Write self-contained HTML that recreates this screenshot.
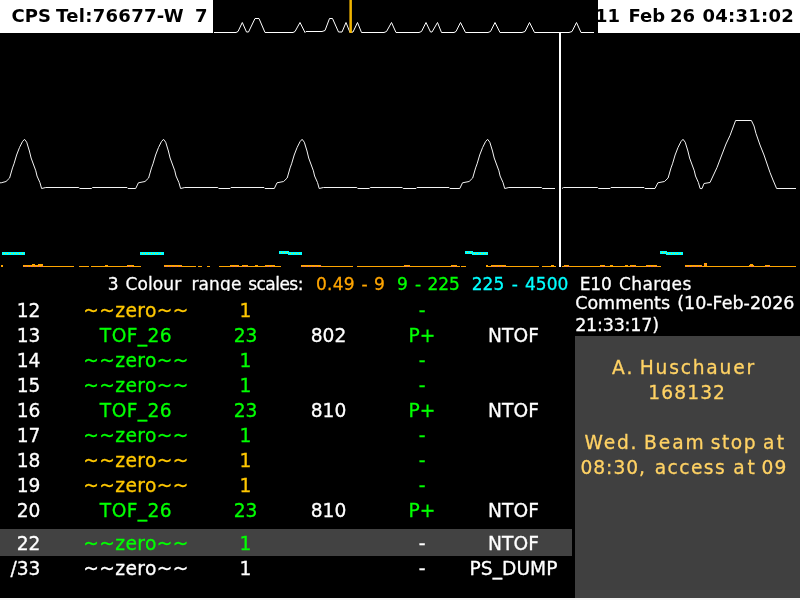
<!DOCTYPE html>
<html><head><meta charset="utf-8">
<style>
html,body{margin:0;padding:0;background:#000;}
body{width:800px;height:600px;position:relative;overflow:hidden;font-family:"DejaVu Sans","Liberation Sans",sans-serif;color:#fff;}
.abs{position:absolute;will-change:transform;}
.row{will-change:transform;}
.row,#scale,#ctitle,#panel{-webkit-text-stroke:0.3px currentColor;}
#tl{left:0;top:0;width:213px;height:33px;background:#fff;color:#000;font-weight:bold;font-size:18px;line-height:32px;white-space:pre;}
#tl span{position:absolute;top:0;}
#tr{left:598px;top:0;width:202px;height:33px;background:#fff;color:#000;font-weight:bold;font-size:18px;line-height:32px;white-space:pre;overflow:hidden;}
#tr span{position:absolute;top:0;}
#plot{left:0;top:0;}
#scale{left:0;top:273px;width:800px;height:18px;overflow:hidden;font-size:17px;line-height:22px;white-space:pre;}
#scale span{position:absolute;top:0;}
.row{position:absolute;left:0;width:572px;height:25px;font-size:18.67px;line-height:25px;white-space:pre;}
.row span{position:absolute;top:0;text-align:center;}
.c1{left:0;width:40.5px;text-align:right !important;}
.c2{left:60px;width:152px;letter-spacing:0.4px;}
.c3{left:215px;width:61px;}
.c4{left:290px;width:77px;}
.c5{left:380px;width:84px;}
.c6{left:455px;width:117px;}
.o{color:#ffc800;}
.g{color:#00ff00;}
.hl{background:#424242;}
#ctitle{left:0;top:292px;width:800px;height:44px;font-size:17.5px;line-height:22px;white-space:pre;}
#ctitle span{position:absolute;}
#panel{left:575px;top:336px;width:225px;height:262px;background:#404040;color:#ffd264;font-size:18.67px;line-height:25px;white-space:pre;}
#panel span{position:absolute;}
#bottom{left:0;top:598px;width:800px;height:2px;background:#f4f4f4;}
</style></head><body>
<svg id="plot" class="abs" width="800" height="270" viewBox="0 0 800 270" shape-rendering="crispEdges">
<polyline fill="none" stroke="#fff" stroke-width="1" stroke-linejoin="round" shape-rendering="geometricPrecision" points="214.0,32.5 236.0,32.5 238.0,31.5 242.3,22.5 246.5,32.0 248.5,32.0 255.0,18.5 259.0,18.5 265.0,32.5 293.0,32.5 295.0,31.5 300.0,22.5 305.0,32.5 306.0,31.5 322.0,31.5 325.0,30.5 329.5,18.5 332.5,18.5 338.5,32.0 342.0,32.0 346.0,22.5 350.0,32.5 353.0,32.0 357.5,22.5 361.5,32.5 384.0,32.5 386.5,31.5 391.5,22.5 396.0,32.5 419.0,32.5 421.5,31.5 426.0,22.5 430.5,32.0 432.0,32.0 437.5,22.5 441.5,32.5 454.0,32.5 456.0,31.5 460.5,22.5 465.5,32.5 488.0,32.5 490.5,31.5 495.0,22.5 500.0,32.5 522.0,32.5 525.0,31.5 529.5,22.5 534.5,32.5 569.0,32.5 572.0,31.5 576.5,22.5 581.0,32.5 594.0,32.5"/>
<polyline fill="none" stroke="#f4f4f4" stroke-width="1" stroke-linejoin="round" shape-rendering="geometricPrecision" points="0.0,182.8 1.2,182.8 6.0,181.5 9.6,178.0 12.5,167.9 14.0,163.8 16.6,155.0 19.5,147.5 22.4,141.7 24.5,139.3 26.7,142.2 29.4,151.0 31.1,158.0 35.8,170.8 37.0,176.0 39.9,182.5 41.6,188.5 45.8,187.5 78.8,187.5 79.8,188.5 91.5,188.5 92.5,187.5 127.0,187.5 128.0,188.5 135.7,188.5 138.4,182.8 145.0,181.5 148.6,178.0 151.5,167.9 153.0,163.8 155.6,155.0 158.5,147.5 161.4,141.7 163.5,139.3 165.7,142.2 168.4,151.0 170.1,158.0 174.8,170.8 176.0,176.0 178.9,182.5 180.6,188.5 184.8,187.5 217.8,187.5 218.8,188.5 230.0,188.5 231.0,187.5 264.0,187.5 265.0,188.5 274.3,188.5 277.0,182.8 283.6,181.5 287.2,178.0 290.1,167.9 291.6,163.8 294.2,155.0 297.1,147.5 300.0,141.7 302.1,139.3 304.3,142.2 307.0,151.0 308.7,158.0 313.4,170.8 314.6,176.0 317.5,182.5 319.2,188.5 323.4,187.5 356.8,187.5 357.8,188.5 369.3,188.5 370.3,187.5 402.2,187.5 403.2,188.5 416.0,188.5 417.0,187.5 449.0,187.5 450.0,188.5 459.8,188.5 462.5,182.8 469.1,181.5 472.7,178.0 475.6,167.9 477.1,163.8 479.7,155.0 482.6,147.5 485.5,141.7 487.6,139.3 489.8,142.2 492.5,151.0 494.2,158.0 498.9,170.8 500.1,176.0 503.0,182.5 504.7,188.5 508.9,187.5 541.5,187.5 542.5,188.5 555.0,188.5"/>
<polyline fill="none" stroke="#f4f4f4" stroke-width="1" stroke-linejoin="round" shape-rendering="geometricPrecision" points="562.0,188.5 563.5,187.5 597.5,187.5 598.5,188.5 610.0,188.5 611.0,187.5 644.0,187.5 645.0,188.5 655.0,188.5 657.9,182.8 664.5,181.5 668.1,178.0 671.0,167.9 672.5,163.8 675.1,155.0 678.0,147.5 680.9,141.7 683.0,139.3 685.2,142.2 687.9,151.0 689.6,158.0 694.3,170.8 695.5,176.0 698.4,182.5 700.1,188.5 702.0,188.6 704.0,183.5 710.0,182.5 717.0,167.5 721.0,157.0 726.0,144.0 730.0,135.5 735.6,120.5 751.4,120.5 754.0,126.0 756.0,133.5 760.0,145.0 764.0,155.0 770.0,172.5 773.0,180.0 776.6,188.5 796.0,188.5"/>
<rect x="349.4" y="0" width="2.5" height="33" fill="#f0b400" shape-rendering="auto"/>
<rect x="559" y="33" width="2" height="234" fill="#fff"/>
<rect x="2" y="252" width="23" height="3" fill="#00ffff"/><line x1="4" y1="253.5" x2="24" y2="253.5" stroke="#e6e600" stroke-width="1" stroke-dasharray="1 2"/>
<rect x="140" y="252" width="24" height="3" fill="#00ffff"/><line x1="142" y1="253.5" x2="163" y2="253.5" stroke="#e6e600" stroke-width="1" stroke-dasharray="1 2"/>
<rect x="279" y="251" width="10" height="3" fill="#00ffff"/><line x1="281" y1="252.5" x2="288" y2="252.5" stroke="#e6e600" stroke-width="1" stroke-dasharray="1 2"/>
<rect x="288" y="252" width="14" height="3" fill="#00ffff"/><line x1="290" y1="253.5" x2="301" y2="253.5" stroke="#e6e600" stroke-width="1" stroke-dasharray="1 2"/>
<rect x="465" y="251" width="8" height="3" fill="#00ffff"/><line x1="467" y1="252.5" x2="472" y2="252.5" stroke="#e6e600" stroke-width="1" stroke-dasharray="1 2"/>
<rect x="472" y="252" width="16" height="3" fill="#00ffff"/><line x1="474" y1="253.5" x2="487" y2="253.5" stroke="#e6e600" stroke-width="1" stroke-dasharray="1 2"/>
<rect x="660" y="251" width="7" height="3" fill="#00ffff"/><line x1="662" y1="252.5" x2="666" y2="252.5" stroke="#e6e600" stroke-width="1" stroke-dasharray="1 2"/>
<rect x="666" y="252" width="17" height="3" fill="#00ffff"/><line x1="668" y1="253.5" x2="682" y2="253.5" stroke="#e6e600" stroke-width="1" stroke-dasharray="1 2"/>
<rect x="23" y="266" width="51" height="1" fill="#ffa500"/>
<rect x="79" y="266" width="10" height="1" fill="#ffa500"/>
<rect x="91" y="266" width="50" height="1" fill="#ffa500"/>
<rect x="164" y="266" width="32" height="1" fill="#ffa500"/>
<rect x="198" y="266" width="4" height="1" fill="#ffa500"/>
<rect x="207" y="266" width="3" height="1" fill="#ffa500"/>
<rect x="219" y="266" width="62" height="1" fill="#ffa500"/>
<rect x="301" y="266" width="52" height="1" fill="#ffa500"/>
<rect x="357" y="266" width="103" height="1" fill="#ffa500"/>
<rect x="461" y="266" width="5" height="1" fill="#ffa500"/>
<rect x="486" y="266" width="53" height="1" fill="#ffa500"/>
<rect x="542" y="266" width="14" height="1" fill="#ffa500"/>
<rect x="562" y="266" width="99" height="1" fill="#ffa500"/>
<rect x="685" y="266" width="111" height="1" fill="#ffa500"/>
<rect x="1" y="265" width="2" height="2" fill="#ffa500"/>
<rect x="23" y="265" width="20" height="2" fill="#ffa500"/>
<rect x="32" y="264" width="3" height="3" fill="#ffa500"/>
<rect x="38" y="264" width="5" height="3" fill="#ffa500"/>
<rect x="105" y="265" width="3" height="2" fill="#ffa500"/>
<rect x="127" y="265" width="7" height="2" fill="#ffa500"/>
<rect x="164" y="265" width="18" height="2" fill="#ffa500"/>
<rect x="230" y="265" width="9" height="2" fill="#ffa500"/>
<rect x="242" y="265" width="6" height="2" fill="#ffa500"/>
<rect x="255" y="265" width="3" height="2" fill="#ffa500"/>
<rect x="265" y="265" width="10" height="2" fill="#ffa500"/>
<rect x="301" y="265" width="20" height="2" fill="#ffa500"/>
<rect x="404" y="265" width="6" height="2" fill="#ffa500"/>
<rect x="451" y="265" width="6" height="2" fill="#ffa500"/>
<rect x="486" y="265" width="2" height="2" fill="#ffa500"/>
<rect x="491" y="265" width="15" height="2" fill="#ffa500"/>
<rect x="551" y="265" width="3" height="2" fill="#ffa500"/>
<rect x="564" y="265" width="5" height="2" fill="#ffa500"/>
<rect x="600" y="265" width="5" height="2" fill="#ffa500"/>
<rect x="610" y="265" width="3" height="2" fill="#ffa500"/>
<rect x="625" y="265" width="3" height="2" fill="#ffa500"/>
<rect x="630" y="265" width="6" height="2" fill="#ffa500"/>
<rect x="646" y="265" width="11" height="2" fill="#ffa500"/>
<rect x="685" y="265" width="17" height="2" fill="#ffa500"/>
<rect x="749" y="265" width="5" height="2" fill="#ffa500"/>
<rect x="750" y="264" width="3" height="3" fill="#ffa500"/>
<rect x="765" y="265" width="5" height="2" fill="#ffa500"/>
<rect x="704" y="263" width="3" height="3" fill="#ffa500"/><rect x="705" y="264" width="1" height="1" fill="#e060a0"/>
<line x1="24" y1="266.5" x2="43" y2="266.5" stroke="#e060a0" stroke-width="1" stroke-dasharray="1 2"/>
<line x1="39" y1="266.5" x2="43" y2="266.5" stroke="#e060a0" stroke-width="1" stroke-dasharray="1 2"/>
<line x1="128" y1="266.5" x2="134" y2="266.5" stroke="#e060a0" stroke-width="1" stroke-dasharray="1 2"/>
<line x1="165" y1="266.5" x2="182" y2="266.5" stroke="#e060a0" stroke-width="1" stroke-dasharray="1 2"/>
<line x1="231" y1="266.5" x2="239" y2="266.5" stroke="#e060a0" stroke-width="1" stroke-dasharray="1 2"/>
<line x1="243" y1="266.5" x2="248" y2="266.5" stroke="#e060a0" stroke-width="1" stroke-dasharray="1 2"/>
<line x1="266" y1="266.5" x2="275" y2="266.5" stroke="#e060a0" stroke-width="1" stroke-dasharray="1 2"/>
<line x1="302" y1="266.5" x2="321" y2="266.5" stroke="#e060a0" stroke-width="1" stroke-dasharray="1 2"/>
<line x1="405" y1="266.5" x2="410" y2="266.5" stroke="#e060a0" stroke-width="1" stroke-dasharray="1 2"/>
<line x1="452" y1="266.5" x2="457" y2="266.5" stroke="#e060a0" stroke-width="1" stroke-dasharray="1 2"/>
<line x1="492" y1="266.5" x2="506" y2="266.5" stroke="#e060a0" stroke-width="1" stroke-dasharray="1 2"/>
<line x1="565" y1="266.5" x2="569" y2="266.5" stroke="#e060a0" stroke-width="1" stroke-dasharray="1 2"/>
<line x1="601" y1="266.5" x2="605" y2="266.5" stroke="#e060a0" stroke-width="1" stroke-dasharray="1 2"/>
<line x1="631" y1="266.5" x2="636" y2="266.5" stroke="#e060a0" stroke-width="1" stroke-dasharray="1 2"/>
<line x1="647" y1="266.5" x2="657" y2="266.5" stroke="#e060a0" stroke-width="1" stroke-dasharray="1 2"/>
<line x1="686" y1="266.5" x2="702" y2="266.5" stroke="#e060a0" stroke-width="1" stroke-dasharray="1 2"/>
<line x1="750" y1="266.5" x2="754" y2="266.5" stroke="#e060a0" stroke-width="1" stroke-dasharray="1 2"/>
<line x1="766" y1="266.5" x2="770" y2="266.5" stroke="#e060a0" stroke-width="1" stroke-dasharray="1 2"/>
</svg>
<div id="tl" class="abs"><span style="left:11.5px">CPS</span><span style="left:56px;letter-spacing:0.3px">Tel:76677-W</span><span style="left:195px">7</span></div>
<div id="tr" class="abs"><span style="left:-3px">11</span><span style="left:30.5px">Feb</span><span style="left:72px">26</span><span style="left:104.5px;letter-spacing:0.25px">04:31:02</span></div>
<div id="scale" class="abs"><span style="left:107.8px;color:#fff">3</span><span style="left:125.6px;letter-spacing:0.08px;color:#fff">Colour</span><span style="left:191.4px;letter-spacing:0.15px;color:#fff">range</span><span style="left:248.2px;letter-spacing:-0.53px;color:#fff">scales:</span><span style="left:316.0px;letter-spacing:0.27px;color:#ffa500">0.49</span><span style="left:361.4px;color:#ffa500">-</span><span style="left:374.0px;color:#ffa500">9</span><span style="left:397.0px;color:#00ff00">9</span><span style="left:415.0px;color:#00ff00">-</span><span style="left:427.4px;color:#00ff00">225</span><span style="left:471.8px;color:#00ffff">225</span><span style="left:511.8px;color:#00ffff">-</span><span style="left:525.0px;color:#00ffff">4500</span><span style="left:579.8px;letter-spacing:-0.20px;color:#fff">E10</span><span style="left:619.0px;letter-spacing:0.40px;color:#fff">Charges</span></div>
<div class="row" style="top:298px"><span class="c1">12</span><span class="c2 o">~~zero~~</span><span class="c3 o">1</span><span class="c5 g">-</span></div>
<div class="row" style="top:323px"><span class="c1">13</span><span class="c2 g">TOF_26</span><span class="c3 g">23</span><span class="c4">802</span><span class="c5 g">P+</span><span class="c6">NTOF</span></div>
<div class="row" style="top:348px"><span class="c1">14</span><span class="c2 g">~~zero~~</span><span class="c3 g">1</span><span class="c5 g">-</span></div>
<div class="row" style="top:373px"><span class="c1">15</span><span class="c2 g">~~zero~~</span><span class="c3 g">1</span><span class="c5 g">-</span></div>
<div class="row" style="top:398px"><span class="c1">16</span><span class="c2 g">TOF_26</span><span class="c3 g">23</span><span class="c4">810</span><span class="c5 g">P+</span><span class="c6">NTOF</span></div>
<div class="row" style="top:423px"><span class="c1">17</span><span class="c2 g">~~zero~~</span><span class="c3 g">1</span><span class="c5 g">-</span></div>
<div class="row" style="top:448px"><span class="c1">18</span><span class="c2 o">~~zero~~</span><span class="c3 o">1</span><span class="c5 g">-</span></div>
<div class="row" style="top:473px"><span class="c1">19</span><span class="c2 o">~~zero~~</span><span class="c3 o">1</span><span class="c5 g">-</span></div>
<div class="row" style="top:498px"><span class="c1">20</span><span class="c2 g">TOF_26</span><span class="c3 g">23</span><span class="c4">810</span><span class="c5 g">P+</span><span class="c6">NTOF</span></div>
<div class="row hl" style="top:529px;height:27px;line-height:29px"><span class="c1">22</span><span class="c2 g">~~zero~~</span><span class="c3 g">1</span><span class="c5">-</span><span class="c6">NTOF</span></div>
<div class="row" style="top:556px"><span class="c1">/33</span><span class="c2">~~zero~~</span><span class="c3">1</span><span class="c5">-</span><span class="c6">PS_DUMP</span></div>
<div id="ctitle" class="abs"><span style="left:575.2px;top:0">Comments</span><span style="left:677.2px;top:0">(10-Feb-2026</span><span style="left:575.2px;top:22px;letter-spacing:-0.2px">21:33:17)</span></div>
<div id="panel" class="abs"><span style="left:37.1px;top:19px;letter-spacing:2.08px">A.</span><span style="left:64.8px;top:19px;letter-spacing:1.78px">Huschauer</span><span style="left:73.3px;top:44px;letter-spacing:1.09px">168132</span><span style="left:9.6px;top:94px;letter-spacing:1.76px">Wed.</span><span style="left:69.1px;top:94px;letter-spacing:1.92px">Beam</span><span style="left:135.8px;top:94px;letter-spacing:1.49px">stop</span><span style="left:188.0px;top:94px;letter-spacing:2.40px">at</span><span style="left:5.4px;top:119px;letter-spacing:0.99px">08:30,</span><span style="left:79.7px;top:119px;letter-spacing:1.44px">access</span><span style="left:158.3px;top:119px;letter-spacing:2.88px">at</span><span style="left:186.6px;top:119px;letter-spacing:0.96px">09</span></div>
<div id="bottom" class="abs"></div>
</body></html>
